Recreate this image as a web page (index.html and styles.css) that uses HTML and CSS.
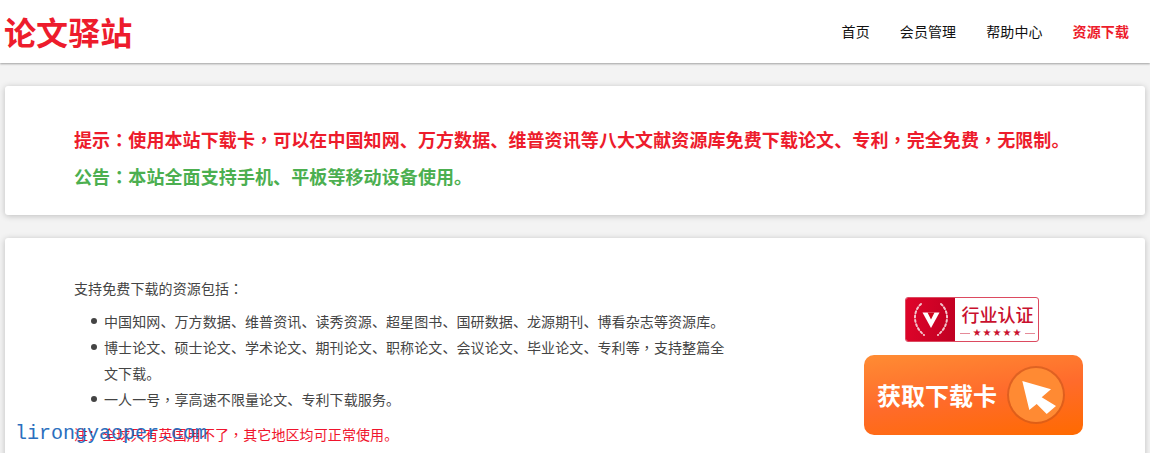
FILE: index.html
```html
<!DOCTYPE html>
<html lang="zh-CN">
<head>
<meta charset="utf-8">
<title>论文驿站</title>
<link rel="stylesheet" href="styles.css">
</head>
<body>
<header class="header">
  <a class="logo">论文驿站</a>
  <nav class="nav">
    <a>首页</a>
    <a>会员管理</a>
    <a>帮助中心</a>
    <a class="active">资源下载</a>
  </nav>
</header>
<main class="main">
  <section class="card notice">
    <p class="tip">提示<span class="pc" lang="zh-TW">：</span>使用本站下载卡<span class="pc" lang="zh-TW">，</span>可以在中国知网、万方数据、维普资讯等八大文献资源库免费下载论文、专利<span class="pc" lang="zh-TW">，</span>完全免费<span class="pc" lang="zh-TW">，</span>无限制。</p>
    <p class="announce">公告<span class="pc" lang="zh-TW">：</span>本站全面支持手机、平板等移动设备使用。</p>
  </section>
  <section class="card detail">
    <div class="info">
      <p>支持免费下载的资源包括<span class="pc" lang="zh-TW">：</span></p>
      <ul class="list">
        <li>中国知网、万方数据、维普资讯、读秀资源、超星图书、国研数据、龙源期刊、博看杂志等资源库。</li>
        <li>博士论文、硕士论文、学术论文、期刊论文、职称论文、会议论文、毕业论文、专利等<span class="pc" lang="zh-TW">，</span>支持整篇全文下载。</li>
        <li>一人一号<span class="pc" lang="zh-TW">，</span>享高速不限量论文、专利下载服务。</li>
      </ul>
      <p class="warn">注：全球只有英国用不了<span class="pc" lang="zh-TW">，</span>其它地区均可正常使用。</p>
    </div>
    <aside class="side">
      <div class="badge">
        <div class="badge-mark">
          <svg width="38" height="36" viewBox="0 0 38 36" fill="none" stroke="#f3c4cc" stroke-width="2" stroke-linecap="round" stroke-dasharray="2 2.4">
            <path d="M9 2C1 9 0 23 12 33"/>
            <path d="M29 2C37 9 38 23 26 33"/>
            <path d="M10.500 10.500H27.500L19 26Z" fill="#fff" stroke="none" stroke-dasharray="none"/>
            <path d="M15.500 10.500H22.500L19 17.500Z" fill="#d0021b" stroke="none" stroke-dasharray="none"/>
          </svg>
        </div>
        <div class="badge-text">
          <span class="badge-title">行业认证</span>
          <span class="badge-stars"><i class="dash"></i>★★★★★<i class="dash"></i></span>
        </div>
      </div>
      <a class="cta">
        <span class="cta-label">获取下载卡</span>
        <svg class="cta-icon" width="60" height="60" viewBox="0 0 60 60">
          <circle cx="30" cy="30" r="29" fill="#c9561a" opacity=".6"/>
          <circle cx="30" cy="30" r="27" fill="#ff8a33"/>
          <path d="M16.300 16L45 24.300 35.700 32.300 50 41 40.700 49 30.700 39 23.300 45Z" fill="#fff"/>
        </svg>
      </a>
    </aside>
  </section>
</main>
<div class="watermark">lirongyaoper.com</div>
</body>
</html>
```

FILE: styles.css
```css
* { box-sizing: border-box; }
html, body { height: 100%; }
body {
  margin: 0;
  overflow: hidden;
  background: #f3f3f3;
  color: #444;
  font: 14px/26px "Noto Sans CJK SC", "Liberation Sans", sans-serif;
  font-kerning: none;
  font-feature-settings: "kern" 0, "palt" 0;
  text-spacing-trim: space-all;
  text-autospace: no-autospace;
  letter-spacing: .1px;
  position: relative;
}
p { margin: 0; }
.pc { font-family: "Noto Sans CJK TC", sans-serif; }

.header {
  height: 63px;
  display: flex;
  align-items: center;
  justify-content: space-between;
  padding: 0 21px 2px 4px;
  background: #fff;
  box-shadow: 0 1px 2px rgba(0, 0, 0, .35);
  position: relative;
}
.logo {
  color: #ed1c2c;
  font-size: 32px;
  font-weight: 700;
  line-height: 40px;
}
.nav { display: flex; gap: 30px; color: #111; }
.nav .active { color: #ed1c2c; font-weight: 700; }

.main { padding: 23px 5px 0; display: flex; flex-direction: column; gap: 23px; }
.card {
  background: #fff;
  border-radius: 3px;
  box-shadow: 0 1px 6px rgba(0, 0, 0, .22);
}
.notice {
  height: 129px;
  padding: 35px 69px 0;
  font-size: 18px;
  line-height: 37px;
  font-weight: 700;
}
.tip { color: #ed1c2c; }
.announce { color: #4caf50; }

.detail {
  display: flex;
  align-items: flex-start;
  justify-content: space-between;
  padding: 37px 62px 40px 69px;
}
.info { width: 655px; }
.list { margin: 7px 0 9px; padding: 0 0 0 30px; list-style: none; }
.list li { position: relative; }
.list li::before {
  content: "";
  position: absolute;
  left: -13px;
  top: 10px;
  width: 6px;
  height: 6px;
  border-radius: 50%;
  background: #444;
}
.warn { color: #f0142d; }

.side {
  width: 219px;
  margin-top: 22px;
  display: flex;
  flex-direction: column;
  align-items: center;
  gap: 13px;
  letter-spacing: 0;
}
.badge {
  width: 134px;
  height: 45px;
  display: flex;
  margin-right: 3px;
  border: 1px solid #dc4a60;
  border-radius: 3px;
  overflow: hidden;
  background: #fff;
}
.badge-mark {
  width: 49px;
  display: flex;
  align-items: center;
  justify-content: center;
  background: linear-gradient(100deg, #e0042a, #bf0022);
}
.badge-text {
  flex: 1;
  display: flex;
  flex-direction: column;
  align-items: center;
  padding-left: 2px;
  color: #c9102e;
}
.badge-title { font-size: 18px; font-weight: 500; line-height: 20px; margin-top: 6px; }
.badge-stars {
  display: flex;
  align-items: center;
  gap: 3px;
  margin-top: 3px;
  font: 10px/12px "DejaVu Sans", sans-serif;
  letter-spacing: 1px;
}
.dash { width: 10px; height: 1px; background: #e58a98; }

.cta {
  width: 219px;
  height: 80px;
  display: flex;
  align-items: center;
  justify-content: space-between;
  padding: 0 17px 0 13px;
  border-radius: 10px;
  background: linear-gradient(172deg, #ff8c33 0%, #ff6b2c 50%, #ff6a00 100%);
  color: #fff;
}
.cta-label { font-size: 24px; font-weight: 700; line-height: 30px; }

.watermark {
  position: absolute;
  left: 15px;
  top: 422px;
  color: #2b6fbe;
  font: 20px/24px "Liberation Mono", monospace;
  letter-spacing: 0;
  white-space: nowrap;
}
```
